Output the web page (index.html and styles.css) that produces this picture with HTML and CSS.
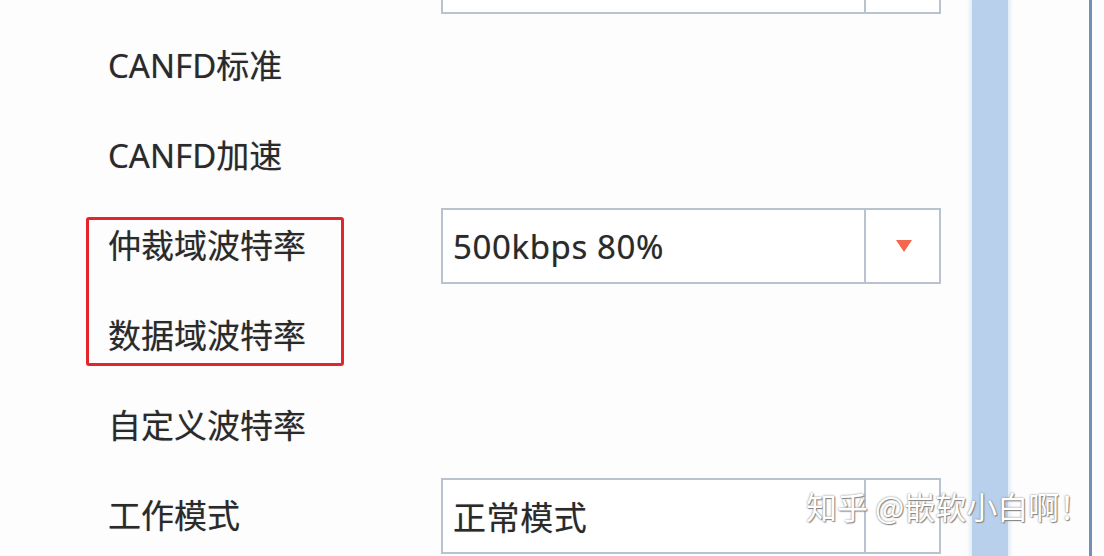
FILE: index.html
```html
<!DOCTYPE html>
<html lang="zh-CN">
  <head>
    <meta charset="UTF-8" />
    <title>CANFD 设置</title>
    <link rel="stylesheet" href="styles.css">
  </head>
  <body>
    <div class="dialog">
      <div class="form">
        <div class="row">
          <span class="label"></span>
          <div class="combo">
            <div class="value"></div>
            <div class="arrow"></div>
          </div>
        </div>
        <div class="row">
          <span class="label">CANFD标准</span>
        </div>
        <div class="row">
          <span class="label">CANFD加速</span>
        </div>
        <div class="row">
          <span class="label">仲裁域波特率</span>
          <div class="combo">
            <div class="value">500kbps 80%</div>
            <div class="arrow"><span class="tri"></span></div>
          </div>
        </div>
        <div class="row">
          <span class="label">数据域波特率</span>
        </div>
        <div class="row">
          <span class="label">自定义波特率</span>
        </div>
        <div class="row">
          <span class="label">工作模式</span>
          <div class="combo">
            <div class="value">正常模式</div>
            <div class="arrow"></div>
          </div>
        </div>

        <!-- 红框标注 -->
        <div class="mark"></div>
      </div>

      <div class="track">
        <div class="thumb"></div>
      </div>
      <div class="side"></div>
    </div>

    <div class="watermark">知乎 @嵌软小白啊！</div>
  </body>
</html>
```

FILE: styles.css
```css
body {
  margin: 0;
  background-color: #fdfdfd;
  font-family: "Noto Sans", "Noto Sans CJK SC", sans-serif;
  color: #222;
  overflow: hidden;
}

.dialog {
  display: flex;
  height: 556px;
  overflow: hidden;
  position: relative;
}

.form {
  position: relative;
  width: 966px;
  margin-top: -69px;
  flex-shrink: 0;
}

.row {
  display: grid;
  grid-template-columns: 333px 500px;
  align-items: center;
  height: 90px;
  padding-left: 108px;
}

.label {
  font-size: 33px;
  line-height: 40px;
  white-space: nowrap;
  color: #2a2a2a;
  text-shadow: 0 0 1px rgba(40, 40, 60, 0.4);
}

.combo {
  display: flex;
  height: 76px;
  box-sizing: border-box;
  border: 2px solid #b9c3cf;
  background-color: #fff;
}

.combo .value {
  flex: 1;
  display: flex;
  align-items: center;
  padding-left: 10px;
  font-size: 33px;
  letter-spacing: 0.6px;
  color: #2a2a2a;
  text-shadow: 0 0 1px rgba(40, 40, 60, 0.4);
}

.combo .arrow {
  width: 73px;
  border-left: 2px solid #b9c3cf;
  display: flex;
  align-items: center;
  justify-content: center;
}

.tri {
  width: 0;
  height: 0;
  border-left: 8px solid transparent;
  border-right: 8px solid transparent;
  border-top: 12px solid #f4674f;
  margin-left: 2px;
}

.mark {
  position: absolute;
  left: 86px;
  top: 286px;
  width: 252px;
  height: 143px;
  border: 3px solid #e3262b;
  border-radius: 3px;
}

.track {
  width: 42px;
  flex-shrink: 0;
}

.thumb {
  margin-left: 6px;
  width: 36px;
  height: 100%;
  background-color: #b9d0ec;
  box-shadow: 0 0 4px 2px #dde8f5;
}

.side {
  width: 81px;
  flex-shrink: 0;
  border-right: 3px solid #7090b8;
}

.watermark {
  position: absolute;
  left: 806px;
  top: 486px;
  font-family: "Noto Sans CJK SC", sans-serif;
  font-size: 31px;
  line-height: 40px;
  color: #fff;
  white-space: nowrap;
  text-shadow: 0 0 2px #777, 1px 1px 1px #888;
}
```
